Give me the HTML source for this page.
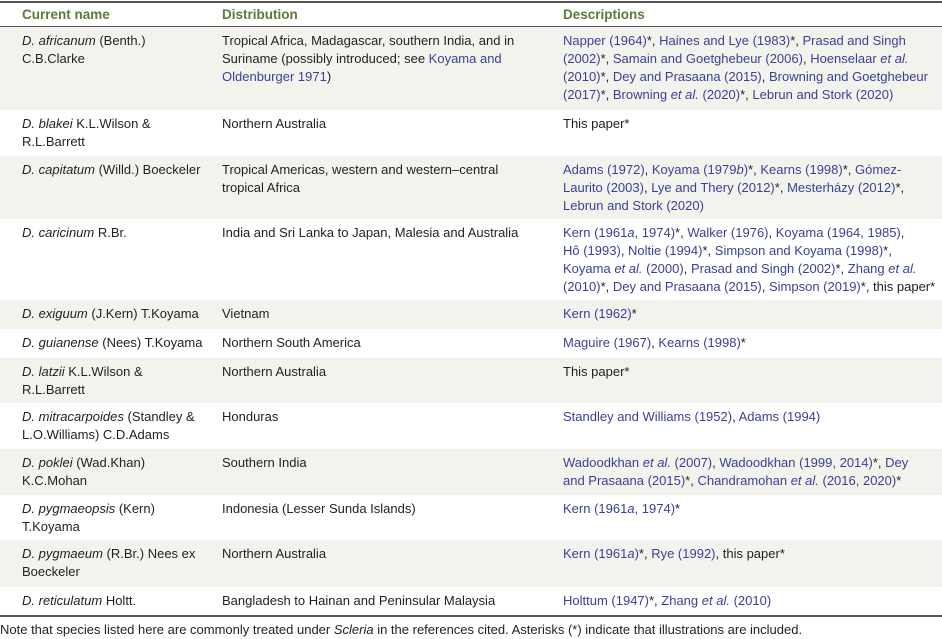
<!DOCTYPE html>
<html><head><meta charset="utf-8"><style>
body{margin:0;width:942px;height:638px;background:#fff;font-family:"Liberation Sans",sans-serif;font-size:13px;color:#222;position:relative;overflow:hidden}
.r{position:absolute;left:0;width:942px}
.g{background:#f3f3ee}
.c{position:absolute;white-space:nowrap;line-height:18px}
.c1{left:22px}.c2{left:222px}.c3{left:563px}
a{color:#3b3f96;text-decoration:none}
.h{color:#5b7a3a;font-weight:bold;font-size:13.5px}
</style></head><body>
<div class="r" style="top:1px;height:2px;background:#555"></div>
<div class="r" style="top:3px;height:23px"><div class="c c1 h" style="top:3px">Current name</div><div class="c c2 h" style="top:3px">Distribution</div><div class="c c3 h" style="top:3px">Descriptions</div></div>
<div class="r" style="top:26px;height:1px;background:#555"></div>

<div class="r g" style="top:27px;height:83px">
<div class="c c1" style="top:5px"><i>D. africanum</i> (Benth.)<br>C.B.Clarke</div>
<div class="c c2" style="top:5px">Tropical Africa, Madagascar, southern India, and in<br>Suriname (possibly introduced; see <a>Koyama and</a><br><a>Oldenburger 1971</a>)</div>
<div class="c c3" style="top:5px"><a>Napper (1964)</a>*, <a>Haines and Lye (1983)</a>*, <a>Prasad and Singh</a><br><a>(2002)</a>*, <a>Samain and Goetghebeur (2006)</a>, <a>Hoenselaar <i>et al.</i></a><br><a>(2010)</a>*, <a>Dey and Prasaana (2015)</a>, <a>Browning and Goetghebeur</a><br><a>(2017)</a>*, <a>Browning <i>et al.</i> (2020)</a>*, <a>Lebrun and Stork (2020)</a></div>
</div>
<div class="r" style="top:110px;height:46px">
<div class="c c1" style="top:5px"><i>D. blakei</i> K.L.Wilson &amp;<br>R.L.Barrett</div>
<div class="c c2" style="top:5px">Northern Australia</div>
<div class="c c3" style="top:5px">This paper*</div>
</div>
<div class="r g" style="top:156px;height:63px">
<div class="c c1" style="top:5px"><i>D. capitatum</i> (Willd.) Boeckeler</div>
<div class="c c2" style="top:5px">Tropical Americas, western and western–central<br>tropical Africa</div>
<div class="c c3" style="top:5px"><a>Adams (1972)</a>, <a>Koyama (1979<i>b</i>)</a>*, <a>Kearns (1998)</a>*, <a>Gómez-</a><br><a>Laurito (2003)</a>, <a>Lye and Thery (2012)</a>*, <a>Mesterházy (2012)</a>*,<br><a>Lebrun and Stork (2020)</a></div>
</div>
<div class="r" style="top:219px;height:81px">
<div class="c c1" style="top:5px"><i>D. caricinum</i> R.Br.</div>
<div class="c c2" style="top:5px">India and Sri Lanka to Japan, Malesia and Australia</div>
<div class="c c3" style="top:5px"><a>Kern (1961<i>a</i>, 1974)</a>*, <a>Walker (1976)</a>, <a>Koyama (1964, 1985)</a>,<br><a>Hô (1993)</a>, <a>Noltie (1994)</a>*, <a>Simpson and Koyama (1998)</a>*,<br><a>Koyama <i>et al.</i> (2000)</a>, <a>Prasad and Singh (2002)</a>*, <a>Zhang <i>et al.</i></a><br><a>(2010)</a>*, <a>Dey and Prasaana (2015)</a>, <a>Simpson (2019)</a>*, this paper*</div>
</div>
<div class="r g" style="top:300px;height:29px">
<div class="c c1" style="top:5px"><i>D. exiguum</i> (J.Kern) T.Koyama</div>
<div class="c c2" style="top:5px">Vietnam</div>
<div class="c c3" style="top:5px"><a>Kern (1962)</a>*</div>
</div>
<div class="r" style="top:329px;height:29px">
<div class="c c1" style="top:5px"><i>D. guianense</i> (Nees) T.Koyama</div>
<div class="c c2" style="top:5px">Northern South America</div>
<div class="c c3" style="top:5px"><a>Maguire (1967)</a>, <a>Kearns (1998)</a>*</div>
</div>
<div class="r g" style="top:358px;height:45px">
<div class="c c1" style="top:5px"><i>D. latzii</i> K.L.Wilson &amp;<br>R.L.Barrett</div>
<div class="c c2" style="top:5px">Northern Australia</div>
<div class="c c3" style="top:5px">This paper*</div>
</div>
<div class="r" style="top:403px;height:46px">
<div class="c c1" style="top:5px"><i>D. mitracarpoides</i> (Standley &amp;<br>L.O.Williams) C.D.Adams</div>
<div class="c c2" style="top:5px">Honduras</div>
<div class="c c3" style="top:5px"><a>Standley and Williams (1952)</a>, <a>Adams (1994)</a></div>
</div>
<div class="r g" style="top:449px;height:46px">
<div class="c c1" style="top:5px"><i>D. poklei</i> (Wad.Khan)<br>K.C.Mohan</div>
<div class="c c2" style="top:5px">Southern India</div>
<div class="c c3" style="top:5px"><a>Wadoodkhan <i>et al.</i> (2007)</a>, <a>Wadoodkhan (1999, 2014)</a>*, <a>Dey</a><br><a>and Prasaana (2015)</a>*, <a>Chandramohan <i>et al.</i> (2016, 2020)</a>*</div>
</div>
<div class="r" style="top:495px;height:45px">
<div class="c c1" style="top:5px"><i>D. pygmaeopsis</i> (Kern)<br>T.Koyama</div>
<div class="c c2" style="top:5px">Indonesia (Lesser Sunda Islands)</div>
<div class="c c3" style="top:5px"><a>Kern (1961<i>a</i>, 1974)</a>*</div>
</div>
<div class="r g" style="top:540px;height:47px">
<div class="c c1" style="top:5px"><i>D. pygmaeum</i> (R.Br.) Nees ex<br>Boeckeler</div>
<div class="c c2" style="top:5px">Northern Australia</div>
<div class="c c3" style="top:5px"><a>Kern (1961<i>a</i>)</a>*, <a>Rye (1992)</a>, this paper*</div>
</div>
<div class="r" style="top:587px;height:28px">
<div class="c c1" style="top:5px"><i>D. reticulatum</i> Holtt.</div>
<div class="c c2" style="top:5px">Bangladesh to Hainan and Peninsular Malaysia</div>
<div class="c c3" style="top:5px"><a>Holttum (1947)</a>*, <a>Zhang <i>et al.</i> (2010)</a></div>
</div>
<div class="r" style="top:615px;height:2px;background:#555"></div>
<div class="c" style="left:0;top:621px">Note that species listed here are commonly treated under <i>Scleria</i> in the references cited. Asterisks (*) indicate that illustrations are included.</div>
</body></html>
